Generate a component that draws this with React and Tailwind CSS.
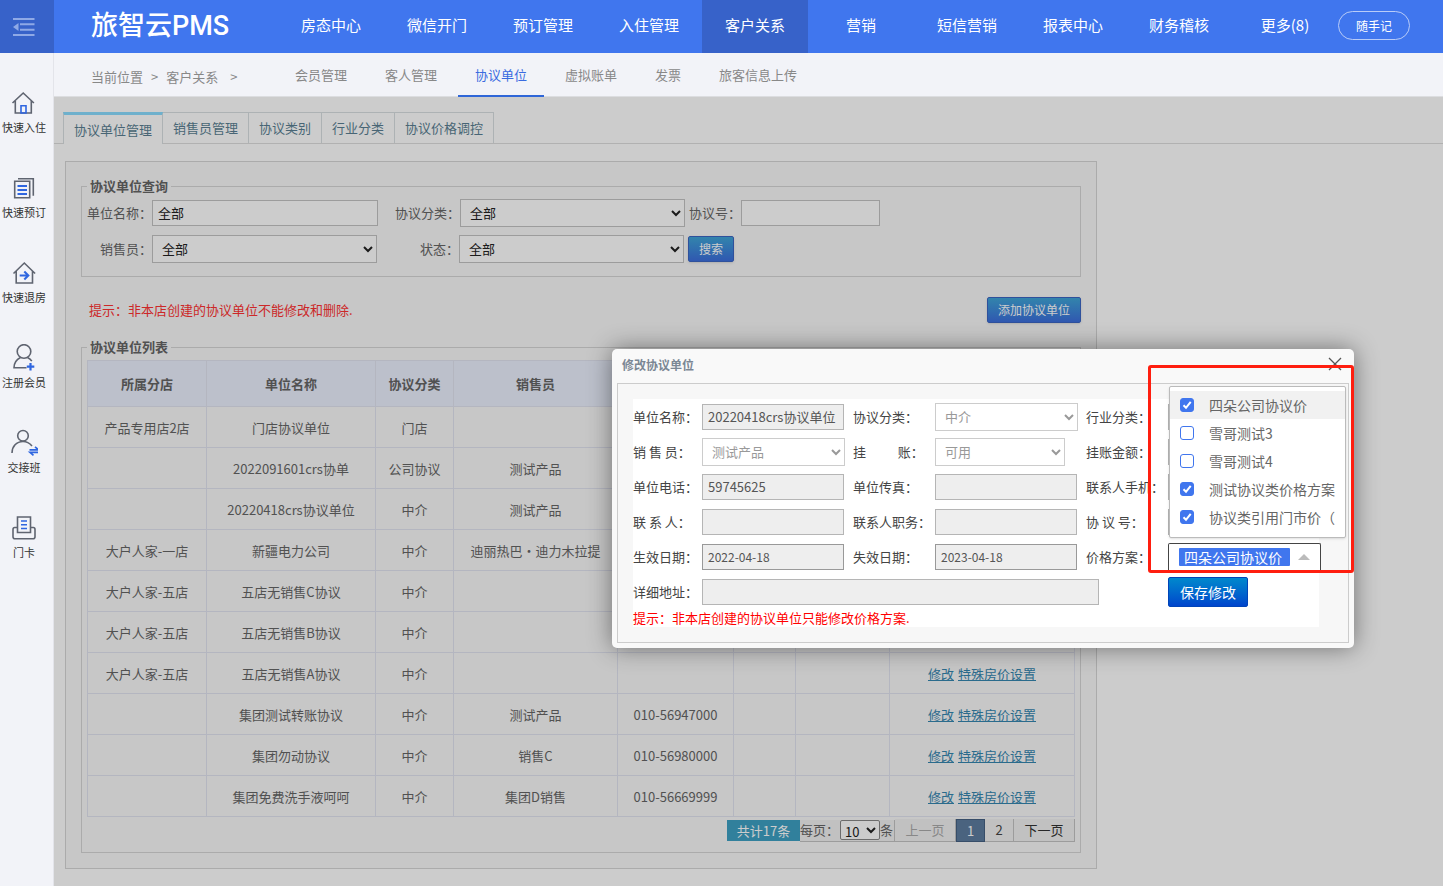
import { useState } from "react";

const NAV = ["房态中心", "微信开门", "预订管理", "入住管理", "客户关系", "营销", "短信营销", "报表中心", "财务稽核", "更多(8)"];
const SUB_NAV = ["会员管理", "客人管理", "协议单位", "虚拟账单", "发票", "旅客信息上传"];
const TABS = ["协议单位管理", "销售员管理", "协议类别", "行业分类", "协议价格调控"];

const HEADERS = ["所属分店", "单位名称", "协议分类", "销售员", "", "", "", ""];
const ROWS = [
  ["产品专用店2店", "门店协议单位", "门店", "", ""],
  ["", "2022091601crs协单", "公司协议", "测试产品", ""],
  ["", "20220418crs协议单位", "中介", "测试产品", ""],
  ["大户人家-一店", "新疆电力公司", "中介", "迪丽热巴·迪力木拉提", ""],
  ["大户人家-五店", "五店无销售C协议", "中介", "", ""],
  ["大户人家-五店", "五店无销售B协议", "中介", "", ""],
  ["大户人家-五店", "五店无销售A协议", "中介", "", ""],
  ["", "集团测试转账协议", "中介", "测试产品", "010-56947000"],
  ["", "集团勿动协议", "中介", "销售C", "010-56980000"],
  ["", "集团免费洗手液呵呵", "中介", "集团D销售", "010-56669999"],
];

const PLANS = [
  { name: "四朵公司协议价", on: true },
  { name: "雪哥测试3", on: false },
  { name: "雪哥测试4", on: false },
  { name: "测试协议类价格方案", on: true },
  { name: "协议类引用门市价（", on: true },
];

const HomeIcon = () => (
  <svg width="28" height="28" viewBox="0 0 28 28" fill="none" stroke="#5f6470" strokeWidth="1.6">
    <path d="M2.500 14 13.200 4l10.700 10M5.300 12v12h16V12" />
    <path d="M11 24v-7.300h5V24z" stroke="#2f66e0" />
  </svg>
);

const BookIcon = () => (
  <svg width="28" height="28" viewBox="0 0 28 28" fill="none" stroke="#5f6470" strokeWidth="1.6">
    <path d="M4.700 7.200h15v16.600h-15zM8 4.700h15.300v17" />
    <path d="M7.500 12h9.500M7.500 16h9.500M7.500 20h9.500" stroke="#2f66e0" strokeWidth="1.900" />
  </svg>
);

const CheckoutIcon = () => (
  <svg width="28" height="28" viewBox="0 0 28 28" fill="none" stroke="#5f6470" strokeWidth="1.6">
    <path d="M3.500 14.500 14.300 4l10.800 10.500M6.200 12v12h16.300V12" />
    <path d="M9.700 16.500h8M14.300 12.500l4 4-4 4" stroke="#2f66e0" strokeWidth="2.100" />
  </svg>
);

const MemberIcon = () => (
  <svg width="28" height="28" viewBox="0 0 28 28" fill="none" stroke="#5f6470" strokeWidth="1.6">
    <circle cx="14" cy="7.500" r="6.800" />
    <path d="M10.500 13.500C6.500 15.500 4 18.500 4 23.800h12.500M17.500 13.500c1.700.8 3.300 2 4.300 3.700" />
    <path d="M20.500 19v7.500M16.800 22.700h7.500" stroke="#2f66e0" strokeWidth="2.200" />
  </svg>
);

const ShiftIcon = () => (
  <svg width="28" height="28" viewBox="0 0 28 28" fill="none" stroke="#5f6470" strokeWidth="1.6">
    <circle cx="13" cy="6.800" r="5.300" />
    <path d="M2 24c0-6.500 4.500-11.500 11-11.500 3.700 0 6.500 1.500 9 4.500" />
    <path d="M19.500 20.800h9L25 17.800M29 23.300h-9l3.500 3" stroke="#2f66e0" strokeWidth="1.700" />
  </svg>
);

const CardIcon = () => (
  <svg width="28" height="28" viewBox="0 0 28 28" fill="none" stroke="#5f6470" strokeWidth="1.6">
    <path d="M7.500 18.500V3h13v15.500z" />
    <path d="M7.500 13.500H4.700Q3 13.500 3 15.500v7.300q0 2 2 2h18q2 0 2-2v-7.300q0-2-1.700-2h-2.800" />
    <path d="M11 7h6M11 10.700h6M11 14.500h6" stroke="#2f66e0" strokeWidth="1.400" />
  </svg>
);

const SIDE = [
  { label: "快速入住", Icon: HomeIcon },
  { label: "快速预订", Icon: BookIcon },
  { label: "快速退房", Icon: CheckoutIcon },
  { label: "注册会员", Icon: MemberIcon },
  { label: "交接班", Icon: ShiftIcon },
  { label: "门卡", Icon: CardIcon },
];

const smallBtn =
  "h-[26px] rounded-[2px] border border-[#3b66c4] bg-gradient-to-b from-[#40a5d8] to-[#3d6edc] text-xs text-white shadow-sm";

function Header() {
  return (
    <header className="flex h-[53px] bg-[#4076ee] text-white">
      <button aria-label="收起菜单" className="flex w-[54px] shrink-0 items-center justify-center bg-[#3762c9] pr-[7px]">
        <svg width="22" height="20" viewBox="0 0 22 20" fill="none" stroke="#8fa9e6" strokeWidth="2">
          <path d="M0 2h21.500M7 7.300h14.500M7 12.700h14.500M0 18h21.500" />
          <path d="M0 10 5.500 6v8z" fill="#8fa9e6" stroke="none" />
        </svg>
      </button>
      <h1 className="w-[224px] shrink-0 whitespace-nowrap pl-[37px] font-[Roboto,'Noto_Sans_CJK_SC',sans-serif] text-[27px] font-medium leading-[52px]">旅智云PMS</h1>
      <nav className="flex">
        {NAV.map((item) => (
          <a
            key={item}
            href="#"
            className={`w-[106px] shrink-0 text-center text-[15px] leading-[50px] ${item === "客户关系" ? "bg-[#3762c9]" : ""}`}
          >
            {item}
          </a>
        ))}
      </nav>
      <button className="mt-[11px] h-[29px] w-[72px] shrink-0 rounded-full border border-[#b9ccf8] text-xs">随手记</button>
    </header>
  );
}

function Sidebar() {
  return (
    <aside className="w-[54px] shrink-0 border-r border-[#e3e4ea] bg-[#f2f3f8] pt-9">
      {SIDE.map(({ label, Icon }) => (
        <a key={label} href="#" className="flex h-[85px] w-12 flex-col items-center text-[11px] leading-4 text-[#333]">
          <Icon />
          <span className="mt-[2px] whitespace-nowrap">{label}</span>
        </a>
      ))}
    </aside>
  );
}

function SubNav() {
  return (
    <div className="flex h-11 border-b border-[#dcdde0] bg-[#f2f3f8] text-[#888]">
      <div className="flex w-[224px] shrink-0 pl-[37px] leading-[48px]">
        <span>当前位置</span>
        <span className="mx-2">&gt;</span>
        <span>客户关系</span>
        <span className="ml-3">&gt;</span>
      </div>
      <nav className="flex gap-1">
        {SUB_NAV.map((item) => (
          <a
            key={item}
            href="#"
            className={`h-11 px-[17px] leading-[44px] ${item === "协议单位" ? "border-b-2 border-[#2f66d8] text-[#3a6be0]" : ""}`}
          >
            {item}
          </a>
        ))}
      </nav>
    </div>
  );
}

function Tabs() {
  return (
    <div className="flex h-[47px] items-end border-b border-[#dedede] pl-[9px] text-[#5b7f93]">
      {TABS.map((tab, i) => (
        <button
          key={tab}
          className={
            i === 0
              ? "-mb-px h-8 border-x border-t-3 border-x-[#d9dfe2] border-t-[#8adcff] bg-white px-[10px]"
              : "h-[31px] border-r border-t border-[#d9dfe2] px-[10px]"
          }
        >
          {tab}
        </button>
      ))}
    </div>
  );
}

function SearchForm() {
  const field = "border border-[#c4c4c4] bg-white text-[#222]";
  return (
    <fieldset className="border border-[#d6d6d6] px-[5px] pb-[13px] pt-[3px]">
      <legend className="px-[3px] font-bold leading-5">协议单位查询</legend>
      <div className="flex h-7 items-center">
        <label htmlFor="q-name" className="w-[65px]">单位名称：</label>
        <input id="q-name" defaultValue="全部" className={`h-[26px] w-[226px] px-[5px] pb-[2px] ${field}`} />
        <label htmlFor="q-type" className="ml-[17px] w-[65px]">协议分类：</label>
        <select id="q-type" className={`h-7 w-[225px] px-[5px] pb-[2px] ${field}`}>
          <option>全部</option>
        </select>
        <label htmlFor="q-no" className="ml-1 w-[52px]">协议号：</label>
        <input id="q-no" className={`h-[26px] w-[139px] px-[5px] ${field}`} />
      </div>
      <div className="mt-2 flex h-7 items-center">
        <label htmlFor="q-sales" className="w-[65px] text-right">销售员：</label>
        <select id="q-sales" className={`h-7 w-[225px] px-[5px] pb-[2px] ${field}`}>
          <option>全部</option>
        </select>
        <label htmlFor="q-state" className="ml-[17px] w-[65px] text-right">状态：</label>
        <select id="q-state" className={`h-7 w-[225px] px-[5px] pb-[2px] ${field}`}>
          <option>全部</option>
        </select>
        <button className={`ml-1 w-[46px] ${smallBtn}`}>搜索</button>
      </div>
    </fieldset>
  );
}

function Pager() {
  const cell = "border-b border-r border-[#c4c4c4] bg-[#f2f2f2]";
  return (
    <div className="mt-[2px] flex h-[23px] items-center justify-end">
      <span className="h-[21px] w-[73px] bg-[#3ea0c3] text-center leading-[21px] text-white">共计17条</span>
      <span className={`flex h-[22px] w-[95px] items-center ${cell}`}>
        <label htmlFor="size" className="w-10 whitespace-nowrap">每页：</label>
        <select id="size" className="h-5 w-10 rounded-[2px] border border-[#888] bg-white pb-[2px] text-[#222]">
          <option>10</option>
        </select>
        条
      </span>
      <button className={`h-[23px] w-[61px] text-[#aaa] ${cell}`} disabled>上一页</button>
      <button className="h-[23px] w-[29px] border border-[#456182] bg-[#5d7c9f] text-white">1</button>
      <button className={`h-[23px] w-[29px] text-[#444] ${cell}`}>2</button>
      <button className={`h-[23px] w-[61px] text-[#333] ${cell}`}>下一页</button>
    </div>
  );
}

function UnitList() {
  return (
    <fieldset className="border border-[#d6d6d6] px-[5px] pb-[10px] pt-[3px]">
      <legend className="px-[3px] font-bold leading-5">协议单位列表</legend>
      <table className="w-full table-fixed border-collapse text-center">
        <colgroup>
          <col className="w-[119px]" />
          <col className="w-[169px]" />
          <col className="w-[78px]" />
          <col className="w-[164px]" />
          <col className="w-[116px]" />
          <col className="w-[62px]" />
          <col className="w-[94px]" />
          <col />
        </colgroup>
        <thead>
          <tr className="h-[46px] bg-[#ebf0fe]">
            {HEADERS.map((h, i) => (
              <th key={i} className="border border-[#e2e4f0] font-bold">{h}</th>
            ))}
          </tr>
        </thead>
        <tbody>
          {ROWS.map((row) => (
            <tr key={row[1]} className="h-[41px]">
              {row.map((cell, i) => (
                <td key={i} className="whitespace-nowrap border border-[#e2e4f0] pt-[2px]">{cell}</td>
              ))}
              <td className="border border-[#e2e4f0]" />
              <td className="border border-[#e2e4f0]" />
              <td className="whitespace-nowrap border border-[#e2e4f0] pt-[2px] text-[#3586b0]">
                <a href="#" className="mr-1 underline">修改</a>
                <a href="#" className="underline">特殊房价设置</a>
              </td>
            </tr>
          ))}
        </tbody>
      </table>
      <Pager />
    </fieldset>
  );
}

function Field({ id, label, value = "", type = "input", className = "" }) {
  return (
    <>
      <label htmlFor={id} className="whitespace-pre">{label}</label>
      {type === "select" ? (
        <select id={id} className={`h-7 border border-[#ccc] bg-white px-[5px] text-[#999] ${className || "w-[143px]"}`}>
          <option>{value}</option>
        </select>
      ) : (
        <input
          id={id}
          defaultValue={value}
          readOnly
          className={`h-[26px] border bg-[#eee] px-[5px] text-[#555] ${className || "w-[142px] border-[#b5b5b5]"}`}
        />
      )}
    </>
  );
}

function PlanMenu() {
  const [plans, setPlans] = useState(PLANS);
  const toggle = (name) => setPlans(plans.map((p) => (p.name === name ? { ...p, on: !p.on } : p)));

  return (
    <div className="absolute left-[557px] top-[37px] w-[177px] rounded-[2px] border border-[#bbb] bg-white pb-[6px] pt-1 text-sm leading-7 text-[#666] shadow">
      {plans.map((p, i) => (
        <label key={p.name} className={`flex h-7 items-center gap-[15px] overflow-hidden whitespace-nowrap pl-[10px] ${i === 0 ? "bg-[#f1f1f1]" : ""}`}>
          <span className="grid shrink-0">
            <input
              type="checkbox"
              checked={p.on}
              onChange={() => toggle(p.name)}
              className="col-start-1 row-start-1 size-[14px] appearance-none rounded-[3px] border border-[#4076ee] bg-white checked:bg-[#4076ee]"
            />
            {p.on && (
              <svg className="pointer-events-none col-start-1 row-start-1" width="14" height="14" viewBox="0 0 14 14" fill="none" stroke="white" strokeWidth="2">
                <path d="M3.500 7.300 6 9.800l4.700-6" />
              </svg>
            )}
          </span>
          {p.name}
        </label>
      ))}
    </div>
  );
}

function EditDialog() {
  const strong = "w-[142px] border-[#999] text-xs";
  return (
    <div role="dialog" aria-label="修改协议单位" className="absolute left-[612px] top-[349px] w-[742px] rounded-[5px] bg-[#f9f9f9] px-[5px] pb-[5px] shadow-[0_0_24px_rgba(0,0,0,0.45)]">
      <div className="flex h-[34px] items-center justify-between pl-[5px] pr-[7px]">
        <h2 className="pb-[2px] text-xs font-bold text-[#7b8794]">修改协议单位</h2>
        <button aria-label="关闭" className="-mt-1">
          <svg width="14" height="14" viewBox="0 0 14 14" stroke="#555" strokeWidth="1.300">
            <path d="M1 1l12 12M13 1 1 13" />
          </svg>
        </button>
      </div>
      <div className="border border-[#ccc] bg-[#f7f7f7] pb-[15px] pl-[15px] pr-[29px] pt-4 text-[#444]">
        <div className="bg-white">
          <div className="-mt-px grid auto-rows-[35px] grid-cols-[69px_151px_82px_151px_82px_1fr] items-center">
            <Field id="name" label="单位名称：" value="20220418crs协议单位" />
            <Field id="type" label="协议分类：" value="中介" type="select" />
            <Field id="industry" label="行业分类：" />
            <Field id="sales" label="销 售 员：" value="测试产品" type="select" />
            <Field id="credit" label={"挂\u3000\u3000\u00a0\u00a0账："} value="可用" type="select" className="w-[130px]" />
            <Field id="amount" label="挂账金额：" />
            <Field id="tel" label="单位电话：" value="59745625" />
            <Field id="fax" label="单位传真：" />
            <Field id="mobile" label="联系人手机：" />
            <Field id="contact" label="联 系 人：" />
            <Field id="job" label="联系人职务：" />
            <Field id="no" label="协 议 号：" />
            <Field id="from" label="生效日期：" value="2022-04-18" className={strong} />
            <Field id="to" label="失效日期：" value="2023-04-18" className={strong} />
            <span id="plan-label">价格方案：</span>
            <button
              aria-labelledby="plan-label"
              className="flex h-7 w-[153px] items-center justify-between rounded-t-[2px] border border-b-0 border-[#444] bg-white pl-[10px] pr-[10px] text-sm"
            >
              <span className="h-[18px] w-[111px] rounded-[1px] bg-[#4076ee] pl-[5px] text-left leading-[18px] text-white">四朵公司协议价</span>
              <svg width="12" height="6" viewBox="0 0 12 6" fill="#bbb">
                <path d="M6 0 12 6H0z" />
              </svg>
            </button>
            <label htmlFor="address">详细地址：</label>
            <div className="col-span-4">
              <input id="address" readOnly className="h-[26px] w-[397px] border border-[#b5b5b5] bg-[#eee] px-[5px]" />
            </div>
            <button className="h-[30px] w-20 rounded-[2px] border border-[#0044b8] bg-gradient-to-b from-[#0088cc] to-[#0044cc] text-sm text-white">
              保存修改
            </button>
          </div>
          <p className="leading-[18px] text-[#ff0000]">提示：非本店创建的协议单位只能修改价格方案.</p>
        </div>
      </div>
      <PlanMenu />
      {/* highlight frame around the price plan picker */}
      <div className="pointer-events-none absolute left-[536px] top-4 h-[208px] w-[206px] rounded-[3px] border-3 border-[#ff1e0f]" />
    </div>
  );
}

export default function App() {
  return (
    <div className="relative flex min-h-screen flex-col overflow-hidden bg-white font-['Noto_Sans_CJK_SC',sans-serif] text-[13px] leading-5">
      <Header />
      <div className="flex flex-1">
        <Sidebar />
        <div className="flex min-w-0 flex-1 flex-col">
          <SubNav />
          <main className="relative flex-1 text-[#666]">
            <Tabs />
            <section className="mb-[17px] ml-[11px] mt-[17px] max-w-[1032px] border border-[#d6d6d6] bg-[#f9f9f9] px-[15px] pb-[15px] pt-[14px]">
              <SearchForm />
              <div className="mb-[14px] mt-5 flex items-center justify-between pl-2">
                <p className="text-[#ff3333]">提示：非本店创建的协议单位不能修改和删除.</p>
                <button className={`w-[94px] ${smallBtn}`}>添加协议单位</button>
              </div>
              <UnitList />
            </section>
            <div className="absolute inset-0 bg-black/20" />
          </main>
        </div>
      </div>
      <EditDialog />
    </div>
  );
}
